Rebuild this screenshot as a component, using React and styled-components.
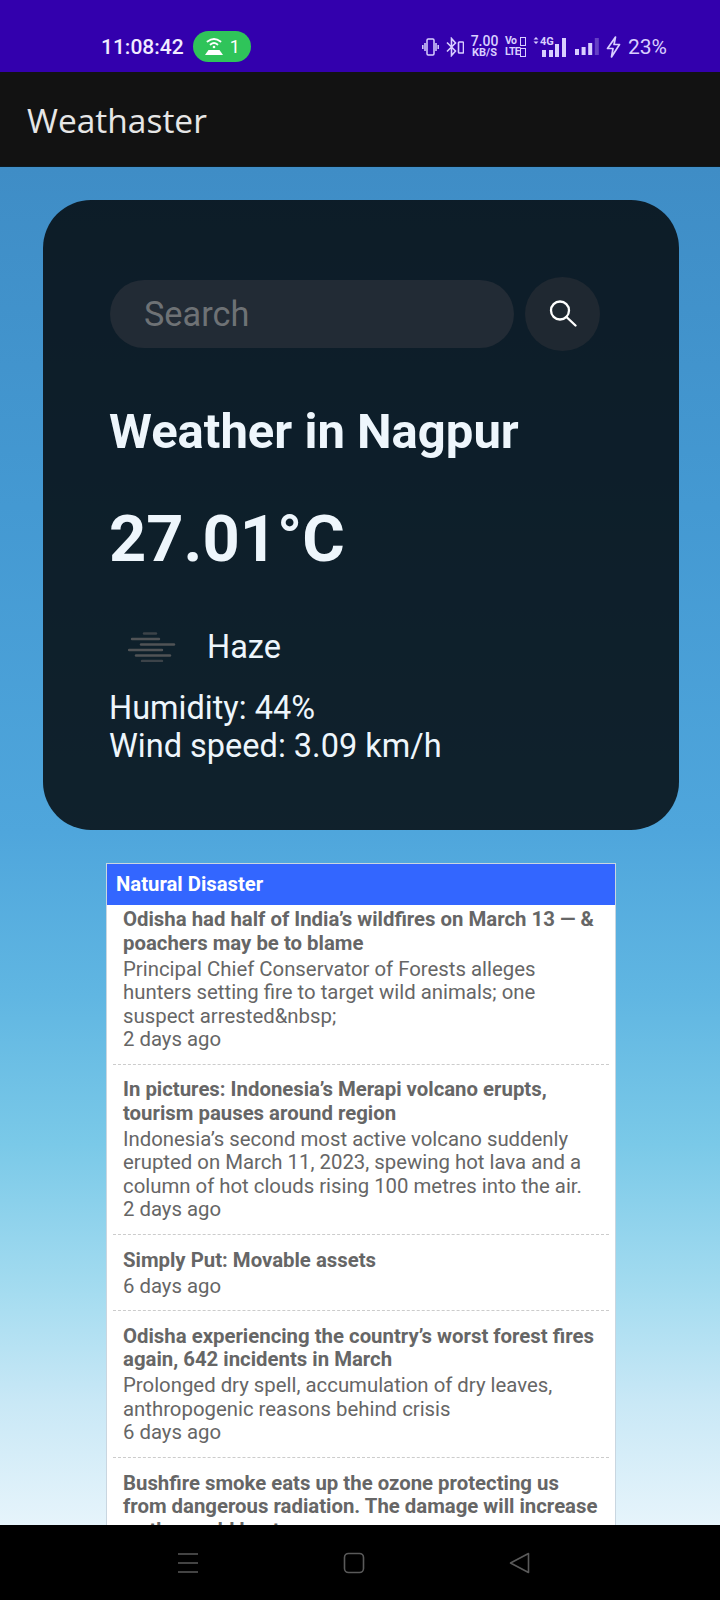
import React from 'react';
import styled, { createGlobalStyle } from 'styled-components';

const GlobalStyle = createGlobalStyle`
  html, body {
    margin: 0;
    padding: 0;
    background: #000;
  }
  * {
    box-sizing: border-box;
  }
`;

const Phone = styled.div`
  width: 720px;
  height: 1600px;
  display: flex;
  flex-direction: column;
  overflow: hidden;
  font-family: Roboto, "Liberation Sans", sans-serif;
`;

const StatusBar = styled.div`
  height: 72px;
  flex: none;
  background: #3300ad;
  color: #f1ecff;
  display: flex;
  align-items: center;
  padding: 21px 53px 0 101px;
  font-size: 21px;
  font-weight: 500;
`;

const HotspotPill = styled.div`
  width: 58px;
  height: 31px;
  margin-left: 9px;
  padding-left: 11px;
  border-radius: 16px;
  background: #2fc45a;
  color: #fff;
  display: flex;
  align-items: center;
  gap: 6px;
  font-size: 18px;
  font-weight: 400;
`;

const StatusRight = styled.div`
  margin-left: auto;
  display: flex;
  align-items: center;
  gap: 7px;
  color: #d9cfff;
`;

const NetSpeed = styled.div`
  width: 27px;
  display: flex;
  flex-direction: column;
  align-items: center;
  font-weight: 700;
  line-height: 10px;
  font-size: 11px;
  span:first-child {
    font-size: 14px;
    line-height: 13px;
    font-weight: 500;
  }
`;

const VoLte = styled.div`
  width: 21px;
  display: flex;
  flex-direction: column;
  gap: 1px;
  font-size: 10.5px;
  line-height: 10px;
  font-weight: 700;
  letter-spacing: -0.6px;
`;

const VoLteRow = styled.div`
  display: flex;
  align-items: center;
  justify-content: space-between;
`;

const SimBox = styled.span`
  width: 6px;
  height: 9px;
  flex: none;
  border: 1.5px solid currentColor;
`;

const Battery = styled.span`
  width: 39px;
  font-weight: 400;
  white-space: nowrap;
`;

const AppBar = styled.header`
  height: 95px;
  flex: none;
  background: #121212;
  border-bottom: 1px solid #0c1a22;
  color: #e6e6e6;
  display: flex;
  align-items: center;
  padding: 2px 0 0 27px;
  font-family: "Open Sans", sans-serif;
  font-size: 33.5px;
`;

const Main = styled.main`
  flex: 1;
  min-height: 0;
  overflow: hidden;
  background: linear-gradient(
    180deg,
    #3f8dc6 0%,
    #4499d2 25%,
    #4fa6dc 49%,
    #60b6e2 61%,
    #7ac9e8 72%,
    #a5dcf0 83%,
    #c9e8f6 91%,
    #e6f4fb 100%
  );
  padding-top: 33px;
`;

const WeatherCard = styled.section`
  width: 636px;
  height: 630px;
  margin-left: 43px;
  padding: 77px 66px 0;
  border-radius: 48px;
  background: rgba(0, 0, 0, 0.8);
  color: #eef6fc;
`;

const SearchRow = styled.div`
  display: flex;
  align-items: center;
  gap: 11px;
  height: 74px;
  margin-left: 1px;
`;

const SearchInput = styled.input`
  width: 404px;
  height: 68px;
  padding: 0 34px;
  border: none;
  outline: none;
  border-radius: 34px;
  background: #222b35;
  color: #fff;
  font-family: inherit;
  font-size: 34.3px;
  &::placeholder {
    color: #6e7275;
  }
`;

const SearchButton = styled.button`
  width: 75px;
  height: 74px;
  flex: none;
  padding: 0 0 1px;
  border: none;
  border-radius: 50%;
  background: #1f2831;
  color: #fff;
  display: flex;
  align-items: center;
  justify-content: center;
`;

const City = styled.h2`
  margin: 53px 0 0;
  font-size: 49px;
  line-height: 56px;
  font-weight: 700;
`;

const Temp = styled.h1`
  margin: 40px 0 0;
  font-size: 65px;
  line-height: 78px;
  font-weight: 700;
`;

const Condition = styled.div`
  display: flex;
  align-items: center;
  gap: 31px;
  margin: 47px 0 0 19px;
  font-size: 32.5px;
  height: 44px;
`;

const Detail = styled.div`
  font-size: 32.5px;
  line-height: 38px;
`;

const DetailList = styled.div`
  margin-top: 20px;
`;

const NewsPanel = styled.section`
  width: 510px;
  margin: 33px 0 0 106px;
  background: #fff;
  border: 1px solid #c9d6e0;
  border-bottom: none;
`;

const NewsHeader = styled.div`
  height: 41px;
  padding: 0 0 1px 9px;
  background: #3366ff;
  color: #fff;
  display: flex;
  align-items: center;
  font-size: 20.3px;
  font-weight: 700;
`;

const NewsList = styled.div`
  padding: 3px 6px 0;
`;

const NewsItem = styled.article`
  padding: 0 6px 12.4px 10px;
  margin-bottom: 13.4px;
  border-bottom: 1px dashed #cccccc;
  color: #666;
  font-size: 20.35px;
  line-height: 23.5px;
`;

const NewsTitle = styled.div`
  font-weight: 700;
  margin-bottom: 2.5px;
  white-space: pre-line;
`;

const NewsText = styled.div`
  white-space: pre-line;
`;

const NavBar = styled.nav`
  height: 75px;
  flex: none;
  background: #000;
  display: flex;
  align-items: center;
  gap: 144px;
  padding-left: 177px;
  color: #5a5a5a;
`;

const news = [
  {
    title: 'Odisha had half of India’s wildfires on March 13 — &\npoachers may be to blame',
    text: 'Principal Chief Conservator of Forests alleges\nhunters setting fire to target wild animals; one\nsuspect arrested&nbsp;',
    age: '2 days ago',
  },
  {
    title: 'In pictures: Indonesia’s Merapi volcano erupts,\ntourism pauses around region',
    text: 'Indonesia’s second most active volcano suddenly\nerupted on March 11, 2023, spewing hot lava and a\ncolumn of hot clouds rising 100 metres into the air.',
    age: '2 days ago',
  },
  {
    title: 'Simply Put: Movable assets',
    age: '6 days ago',
  },
  {
    title: 'Odisha experiencing the country’s worst forest fires\nagain, 642 incidents in March',
    text: 'Prolonged dry spell, accumulation of dry leaves,\nanthropogenic reasons behind crisis',
    age: '6 days ago',
  },
  {
    title: 'Bushfire smoke eats up the ozone protecting us\nfrom dangerous radiation. The damage will increase\nas the world heats',
  },
];

function HotspotIcon() {
  return (
    <svg width="20" height="19" viewBox="0 0 20 19" fill="none" stroke="currentColor" strokeWidth="1.8" strokeLinecap="round">
      <path d="M3.5 4.5 Q10 -0.5 16.5 4.5" />
      <path d="M6.5 7.5 Q10 4.5 13.5 7.5" />
      <circle cx="10" cy="10" r="1.3" fill="currentColor" stroke="none" />
      <path d="M4.5 13 h11 l3.5 5 h-18 z" fill="currentColor" stroke="none" />
    </svg>
  );
}

function VibrateIcon() {
  return (
    <svg width="17" height="18" viewBox="0 0 17 18" fill="none" stroke="currentColor" strokeWidth="1.5">
      <rect x="5" y="1" width="7" height="16" rx="1.2" />
      <path d="M0.8 7 v4 M3 5 v8 M14 5 v8 M16.2 7 v4" />
    </svg>
  );
}

function BluetoothBatteryIcon() {
  return (
    <svg width="18" height="20" viewBox="0 0 18 20" fill="none" stroke="currentColor" strokeWidth="1.6">
      <path d="M1 5.5 L9.5 14 L5.5 18.5 V1.5 L9.5 6 L1 14.5" />
      <rect x="12.5" y="5" width="5" height="11" rx="0.8" />
    </svg>
  );
}

function SignalBars({ bars, fadedIndex }) {
  return (
    <svg width="24" height="17" viewBox="0 0 24 17" fill="currentColor">
      {bars.map((h, i) => (
        <rect key={i} x={i * 6.6} y={17 - h} width="4" height={h} opacity={fadedIndex === i ? 0.3 : 1} />
      ))}
    </svg>
  );
}

function FourGSignal() {
  return (
    <svg width="35" height="24" viewBox="0 0 35 24" fill="currentColor">
      <path d="M0.5 4.5 L3 2 L5.5 4.5 Z M0.5 6.5 L3 9 L5.5 6.5 Z" />
      <text x="7" y="9.5" fontSize="11" fontWeight="700" fontFamily="Roboto, sans-serif">4G</text>
      <rect x="9" y="15" width="4" height="7" />
      <rect x="16" y="15" width="4" height="7" />
      <rect x="22" y="9" width="4" height="13" />
      <rect x="29" y="3" width="4" height="19" />
    </svg>
  );
}

function BoltIcon() {
  return (
    <svg width="15" height="22" viewBox="0 0 15 22" fill="none" stroke="currentColor" strokeWidth="1.7" strokeLinejoin="round">
      <path d="M9.5 1 L1.5 12.5 H7 L5.5 21 L13.5 8.5 H8 Z" />
    </svg>
  );
}

function SearchIcon() {
  return (
    <svg width="28" height="27" viewBox="0 0 28 27" fill="none" stroke="currentColor" strokeWidth="2.3" strokeLinecap="round">
      <circle cx="11" cy="10.5" r="9" />
      <path d="M17.5 17 L26.5 25.5" />
    </svg>
  );
}

function HazeIcon() {
  return (
    <svg width="48" height="30" viewBox="0 0 48 30" stroke="#505356" strokeWidth="2.4" strokeLinecap="round">
      <path d="M16 1.5 H28" opacity="0.7" />
      <path d="M4 7 H31" />
      <path d="M13 12.5 H46" />
      <path d="M1 18 H34" />
      <path d="M8 23.5 H42" />
      <path d="M14 29 H34" opacity="0.7" />
    </svg>
  );
}

function App() {
  return (
    <>
      <GlobalStyle />
      <Phone>
        <StatusBar>
          <span>11:08:42</span>
          <HotspotPill>
            <HotspotIcon />
            <span>1</span>
          </HotspotPill>
          <StatusRight>
            <VibrateIcon />
            <BluetoothBatteryIcon />
            <NetSpeed>
              <span>7.00</span>
              <span>KB/S</span>
            </NetSpeed>
            <VoLte>
              <VoLteRow>Vo<SimBox /></VoLteRow>
              <VoLteRow>LTE<SimBox /></VoLteRow>
            </VoLte>
            <FourGSignal />
            <SignalBars bars={[6, 8, 12, 17]} fadedIndex={3} />
            <BoltIcon />
            <Battery>23%</Battery>
          </StatusRight>
        </StatusBar>
        <AppBar>Weathaster</AppBar>
        <Main>
          <WeatherCard>
            <SearchRow>
              <SearchInput placeholder="Search" />
              <SearchButton aria-label="search">
                <SearchIcon />
              </SearchButton>
            </SearchRow>
            <City>Weather in Nagpur</City>
            <Temp>27.01°C</Temp>
            <Condition>
              <HazeIcon />
              <span>Haze</span>
            </Condition>
            <DetailList>
              <Detail>Humidity: 44%</Detail>
              <Detail>Wind speed: 3.09 km/h</Detail>
            </DetailList>
          </WeatherCard>
          <NewsPanel>
            <NewsHeader>Natural Disaster</NewsHeader>
            <NewsList>
              {news.map((item) => (
                <NewsItem key={item.title}>
                  <NewsTitle>{item.title}</NewsTitle>
                  {item.text && <NewsText>{item.text}</NewsText>}
                  {item.age && <div>{item.age}</div>}
                </NewsItem>
              ))}
            </NewsList>
          </NewsPanel>
        </Main>
        <NavBar>
          <svg width="22" height="22" viewBox="0 0 22 22" stroke="currentColor" strokeWidth="1.6">
            <path d="M1 2 H21 M1 11 H21 M1 20 H21" />
          </svg>
          <svg width="22" height="22" viewBox="0 0 22 22" fill="none" stroke="currentColor" strokeWidth="1.6">
            <rect x="1.5" y="1.5" width="19" height="19" rx="4" />
          </svg>
          <svg width="21" height="22" viewBox="0 0 21 22" fill="none" stroke="currentColor" strokeWidth="1.6" strokeLinejoin="round">
            <path d="M19.5 1.5 V20.5 L1.5 11 Z" />
          </svg>
        </NavBar>
      </Phone>
    </>
  );
}

export default App;
